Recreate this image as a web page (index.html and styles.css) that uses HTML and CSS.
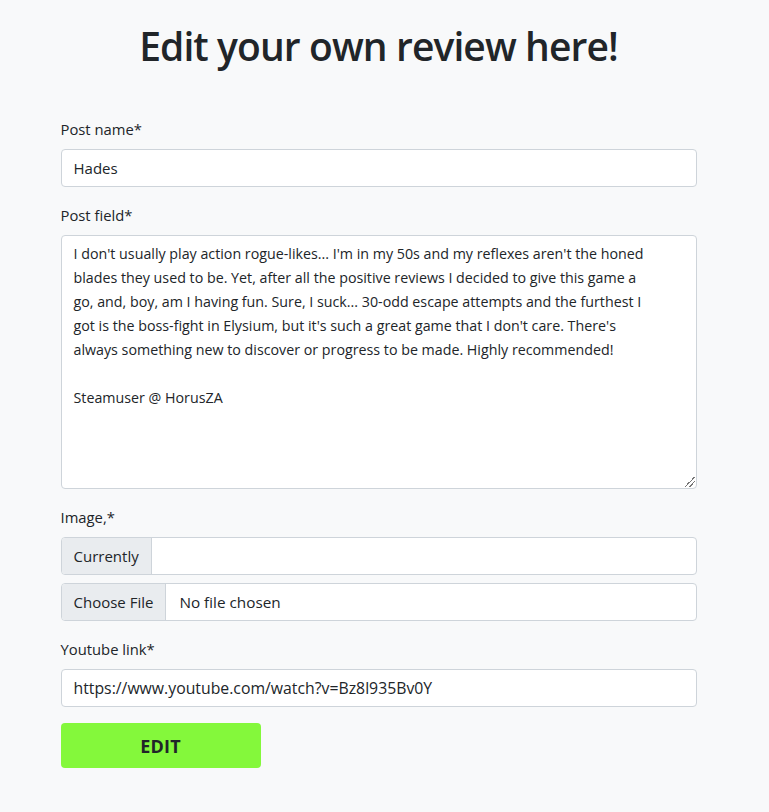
FILE: index.html
```html
<!DOCTYPE html>
<html lang="en">
<head>
<meta charset="utf-8">
<title>Edit review</title>
<link rel="stylesheet" href="styles.css">
</head>
<body>
<main class="container">
  <h1 class="title">Edit your own review here!</h1>
  <form class="review-form">
    <div class="field">
      <label class="label">Post name*</label>
      <div class="control">Hades</div>
    </div>
    <div class="field">
      <label class="label">Post field*</label>
      <div class="control textarea">I don't usually play action rogue-likes... I'm in my 50s and my reflexes aren't the honed
blades they used to be. Yet, after all the positive reviews I decided to give this game a
go, and, boy, am I having fun. Sure, I suck... 30-odd escape attempts and the furthest I
got is the boss-fight in Elysium, but it's such a great game that I don't care. There's
always something new to discover or progress to be made. Highly recommended!

Steamuser @ HorusZA<span class="grip"></span></div>
    </div>
    <div class="field">
      <label class="label">Image,*</label>
      <div class="group group-sm">
        <span class="group-text">Currently</span>
        <span class="group-fill"></span>
      </div>
      <div class="group">
        <span class="group-text">Choose File</span>
        <span class="group-fill file-name">No file chosen</span>
      </div>
    </div>
    <div class="field">
      <label class="label">Youtube link*</label>
      <div class="control link">https://www.youtube.com/watch?v=Bz8l935Bv0Y</div>
    </div>
    <button type="button" class="btn-edit">EDIT</button>
  </form>
</main>
</body>
</html>
```
FILE: styles.css
```css
* { box-sizing: border-box; }
html, body { margin: 0; padding: 0; }
body {
  background: #f8f9fa;
  color: #212529;
  font-family: "Open Sans", "Noto Sans", sans-serif;
  font-size: 16px;
  line-height: 24px;
  height: 812px;
  overflow: hidden;
}
.container {
  width: 720px;
  margin: 0 auto;
  padding: 22px 48px 0 36px;
}
.title {
  margin: 0;
  text-align: center;
  font-size: 39px;
  line-height: 48px;
  font-weight: 600;
  color: #212529;
  letter-spacing: -0.9px;
}
.review-form {
  margin-top: 47px;
  display: flex;
  flex-direction: column;
}
.field { margin-bottom: 16px; display: flex; flex-direction: column; }
.label {
  display: block;
  margin-bottom: 8px;
  font-size: 14.8px;
  line-height: 24px;
}
.control {
  height: 38px;
  padding: 6px 12px;
  background: #fff;
  border: 1px solid #ced4da;
  border-radius: 4px;
  font-size: 15px;
  line-height: 24px;
  white-space: pre;
  overflow: hidden;
  color: #212529;
}
.link { font-size: 15.8px; }
.textarea {
  position: relative;
  height: 254px;
  white-space: pre;
  font-size: 14.25px;
}
.grip {
  position: absolute;
  right: 1px;
  bottom: 1px;
  width: 10px;
  height: 10px;
  background: linear-gradient(135deg, transparent 0 45%, #777 45% 52%, transparent 52% 68%, #777 68% 75%, transparent 75%);
}
.group {
  display: flex;
  height: 38px;
  border: 1px solid #ced4da;
  border-radius: 4px;
  background: #fff;
  overflow: hidden;
  font-size: 15px;
}
.group-sm { margin-bottom: 8px; }
.group-text {
  display: flex;
  align-items: center;
  padding: 0 12px;
  background: #e9ecef;
  border-right: 1px solid #ced4da;
  white-space: nowrap;
}
.group-fill {
  flex: 1;
  display: flex;
  align-items: center;
}
.file-name { padding-left: 13px; font-size: 15.3px; }
.btn-edit {
  width: 200px;
  height: 45px;
  border: 0;
  border-radius: 4px;
  background: #84f83b;
  color: #212529;
  font-family: "Open Sans", "Noto Sans", sans-serif;
  font-weight: 700;
  font-size: 18px;
  letter-spacing: 0.2px;
  padding: 0;
}
```
